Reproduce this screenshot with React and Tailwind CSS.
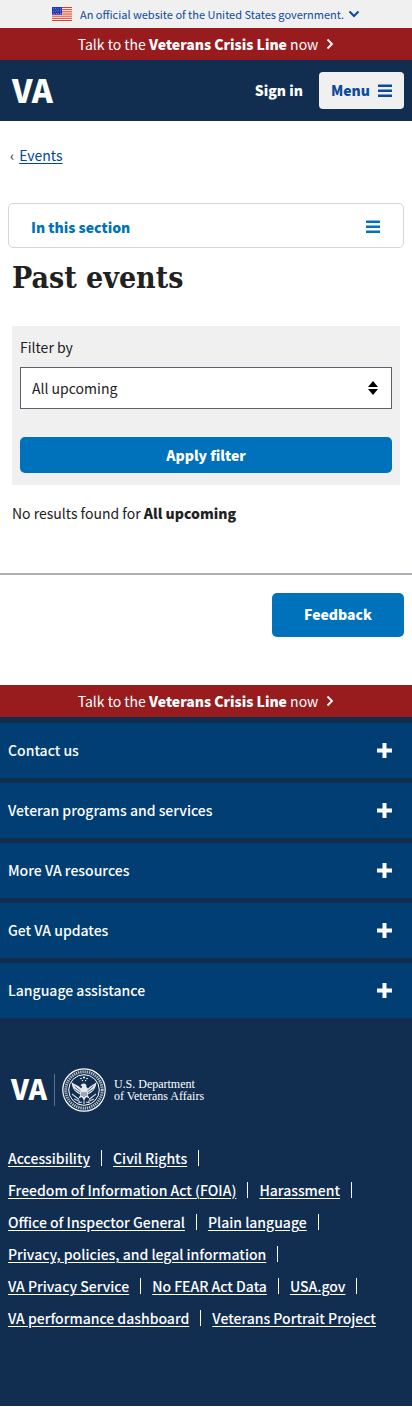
import React from "react";

const SECTIONS = [
  "Contact us",
  "Veteran programs and services",
  "More VA resources",
  "Get VA updates",
  "Language assistance",
];

const LINK_ROWS = [
  ["Accessibility", "Civil Rights"],
  ["Freedom of Information Act (FOIA)", "Harassment"],
  ["Office of Inspector General", "Plain language"],
  ["Privacy, policies, and legal information"],
  ["VA Privacy Service", "No FEAR Act Data", "USA.gov"],
  ["VA performance dashboard", "Veterans Portrait Project"],
];

function Flag() {
  return (
    <svg className="h-[14px] w-5" viewBox="0 0 20 14" aria-hidden="true">
      <rect width="20" height="14" fill="#fff" />
      {[0, 2, 4, 6, 8, 10, 12].map((i) => (
        <rect key={i} y={i * 1.077} width="20" height="1.077" fill="#db3e1f" />
      ))}
      <rect width="10" height="7.6" fill="#1e33b1" />
      {[1.2, 3, 4.8, 6.5].map((y, row) =>
        [1.5, 3.8, 6.1, 8.4].map((x) => (
          <circle key={x + "-" + y} cx={x + (row % 2 ? 0.5 : -0.2)} cy={y} r="0.4" fill="#fff" />
        ))
      )}
    </svg>
  );
}

function Bars() {
  return (
    <svg className="h-[14px] w-[14px]" viewBox="0 0 14 14" fill="currentColor" aria-hidden="true">
      <rect y="0.6" width="14" height="2.4" rx="0.3" />
      <rect y="5.6" width="14" height="2.4" rx="0.3" />
      <rect y="10.6" width="14" height="2.4" rx="0.3" />
    </svg>
  );
}

function CrisisLine() {
  return (
    <button
      type="button"
      className="flex h-8 w-full items-center justify-center bg-[#981b1e] text-[14px] leading-5 text-white"
    >
      <span>
        Talk to the <b className="font-black">Veterans Crisis Line</b> now
      </span>
      <svg className="ml-2 h-3 w-2" viewBox="0 0 8 12" fill="none" stroke="currentColor" strokeWidth="1.8" aria-hidden="true">
        <path d="M1.5 1.5 6 6 1.5 10.5" />
      </svg>
    </button>
  );
}

function Seal() {
  return (
    <svg className="h-11 w-11" viewBox="0 0 44 44" fill="none" stroke="#fff" aria-hidden="true">
      <circle cx="22" cy="22" r="21.2" strokeWidth="1.2" />
      <circle cx="22" cy="22" r="18.2" strokeWidth="3" strokeDasharray="1.3 0.9" opacity="0.7" />
      <circle cx="22" cy="22" r="15.3" strokeWidth="1" />
      <g fill="#fff" stroke="none">
        <circle cx="22" cy="9.5" r="1.1" />
        <circle cx="19" cy="10.5" r="0.8" />
        <circle cx="25" cy="10.5" r="0.8" />
        <circle cx="20.4" cy="12.6" r="0.7" />
        <circle cx="23.6" cy="12.6" r="0.7" />
        <path d="M9.500 14c.6 6.500 4 11 9 12.500l-2 4 3.500-1.500 2 4 2-4 3.500 1.500-2-4c5-1.500 8.400-6 9-12.500-2.500 2.500-5.500 3.500-8.500 6.500l-1.600-1.500c.3-2-.6-3.500-2.600-3.500-1.500 0-2.500.8-3.300 2.200l1.800.3-.9 2.500C16.500 17.500 12.500 16.500 9.500 14z" opacity="0.9" />
      </g>
      <path d="M10 26l7 5.500M34 26l-7 5.500M12 31l6 2.500M32 31l-6 2.500M16 35l4-1M28 35l-4-1M22 33v3" strokeWidth="1.2" opacity="0.8" />
      <path d="M20 24v4M22 24v5M24 24v4M12.500 18l6 5M31.500 18l-6 5M12.500 21l5.500 4M31.500 21l-5.500 4" stroke="#112e51" strokeWidth="0.7" />
    </svg>
  );
}

export default function App() {
  return (
    <div className="bg-white font-['Noto_Sans_CJK_JP','Noto_Sans_CJK_SC',sans-serif] text-[14px] leading-5 text-[#212121]">
      <header>
        <div className="flex h-7 items-center justify-center bg-[#f0f0f0]">
          <Flag />
          <button type="button" className="ml-2 flex items-center gap-1 text-[11px] leading-4 text-[#0b4a9c]">
            <span className="pb-px">An official website of the United States government.</span>
            <svg className="h-3 w-3" viewBox="0 0 12 12" fill="none" stroke="currentColor" strokeWidth="2" aria-hidden="true">
              <path d="M1.500 3.500 6 8l4.500-4.500" />
            </svg>
          </button>
        </div>
        <CrisisLine />
        <div className="flex h-[61px] items-center bg-[#112e51] px-2 text-white">
          <a href="#home" className="ml-1 pb-1 text-[32px] leading-10 font-black">
            VA
          </a>
          <a href="#sign-in" className="ml-auto pb-0.5 font-black">
            Sign in
          </a>
          <button
            type="button"
            className="ml-4 flex h-[37px] items-center gap-2 rounded-[4px] bg-[#f0f0f0] px-3 font-black text-[#0b4a9c]"
          >
            <span className="pb-0.5">Menu</span>
            <Bars />
          </button>
        </div>
      </header>

      <main>
        <nav aria-label="Breadcrumb" className="flex items-center gap-[5px] px-[10px] pt-6">
          <span>‹</span>
          <a href="#events" className="text-[#004795] underline underline-offset-2">
            Events
          </a>
        </nav>

        <div className="mt-[38px] px-2">
          <button
            type="button"
            className="flex h-[45px] w-full items-center justify-between rounded-[5px] border border-[#d6d7d9] pt-0.5 pr-[23px] pl-[22px] font-black text-[#0071bb]"
          >
            In this section
            <Bars />
          </button>
        </div>

        <div className="px-3">
          <h1 className="mt-2 font-['DejaVu_Serif_Condensed','DejaVu_Serif',serif] text-[30px] leading-[44px] font-bold">
            Past events
          </h1>

          <form className="mt-[26px] bg-[#f0f0f0] px-2 pt-[11px] pb-3" onSubmit={(e) => e.preventDefault()}>
            <label htmlFor="filter" className="block">
              Filter by
            </label>
            <div className="relative mt-[10px]">
              <select
                id="filter"
                className="block h-[42px] w-full appearance-none border border-[#5b616b] bg-white px-[11px] leading-5"
              >
                <option>All upcoming</option>
              </select>
              <svg
                className="pointer-events-none absolute top-[14px] right-[14px] h-[14px] w-[10px]"
                viewBox="0 0 10 14"
                aria-hidden="true"
              >
                <path d="M5 0l5 6H0zM0 8h10l-5 6z" />
              </svg>
            </div>
            <button type="submit" className="mt-7 block h-9 w-full rounded-[5px] bg-[#0071bb] font-black text-white">
              Apply filter
            </button>
          </form>

          <p className="mt-[18px]">
            No results found for <b className="font-black">All upcoming</b>
          </p>
        </div>

        <div className="mt-[50px] flex justify-end border-t-2 border-[#aeb0b5] px-2 pt-[18px] pb-12">
          <button type="button" className="h-11 rounded-[5px] bg-[#0071bb] px-8 pb-0.5 font-black text-white">
            Feedback
          </button>
        </div>
      </main>

      <footer className="bg-[#112e51] text-white">
        <CrisisLine />
        <div className="flex flex-col gap-[5px] pt-[6px]">
          {SECTIONS.map((s) => (
            <button
              key={s}
              type="button"
              className="flex h-[55px] items-center justify-between bg-[#003e73] pr-5 pl-2 text-left font-medium"
            >
              <span className="pb-0.5">{s}</span>
              <svg className="h-[15px] w-[15px]" viewBox="0 0 15 15" fill="#fff" aria-hidden="true">
                <path d="M5.500 0h4v5.500H15v4H9.500V15h-4V9.500H0v-4h5.500z" />
              </svg>
            </button>
          ))}
        </div>

        <a href="#va" className="mt-[50px] ml-[11px] flex h-11 items-center">
          <span className="pb-1 text-[28px] leading-10 font-black">VA</span>
          <span className="mx-[7px] h-8 w-px bg-[#5b6f8a]" />
          <Seal />
          <span className="ml-2 font-['Liberation_Serif',serif] text-[12px] leading-3">
            U.S. Department
            <br />
            of Veterans Affairs
          </span>
        </a>

        <div className="px-2 pt-[30px] pb-[72px] font-medium">
          {LINK_ROWS.map((row, r) => (
            <ul key={row[0]} className="flex h-8 items-center">
              {row.map((t, i) => (
                <li key={t} className="flex items-center">
                  <a href="#link" className="underline underline-offset-2">
                    {t}
                  </a>
                  {!(r === LINK_ROWS.length - 1 && i === row.length - 1) && (
                    <span className="mx-[11px] h-4 w-px bg-white" />
                  )}
                </li>
              ))}
            </ul>
          ))}
        </div>
      </footer>
    </div>
  );
}
